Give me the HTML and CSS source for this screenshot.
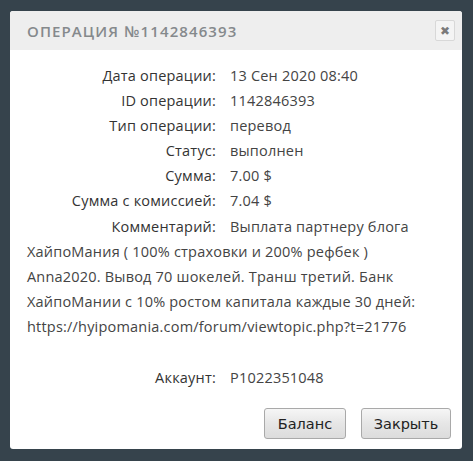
FILE: index.html
```html
<!DOCTYPE html>
<html lang="ru">
<head>
<meta charset="utf-8">
<link rel="stylesheet" href="styles.css">
</head>
<body>
<div class="dialog">
  <div class="dialog-head">
    <span class="dialog-title">Операция №1142846393</span>
    <span class="close-btn">&#10006;</span>
  </div>
  <div class="dialog-body">
    <div class="row"><span class="lbl">Дата операции:</span><span class="val">13 Сен 2020 08:40</span></div>
    <div class="row"><span class="lbl">ID операции:</span><span class="val">1142846393</span></div>
    <div class="row"><span class="lbl">Тип операции:</span><span class="val">перевод</span></div>
    <div class="row"><span class="lbl">Статус:</span><span class="val">выполнен</span></div>
    <div class="row"><span class="lbl">Сумма:</span><span class="val">7.00 $</span></div>
    <div class="row"><span class="lbl">Сумма с комиссией:</span><span class="val">7.04 $</span></div>
    <div class="row comment"><span class="lbl">Комментарий:</span>Выплата партнеру блога ХайпоМания ( 100% страховки и 200% рефбек ) Anna2020. Вывод 70 шокелей. Транш третий. Банк ХайпоМании с 10% ростом капитала каждые 30 дней: https://hyipomania.com/forum/viewtopic.php?t=21776</div>
    <div class="row account"><span class="lbl">Аккаунт:</span><span class="val">P1022351048</span></div>
    <div class="actions">
      <button class="btn btn-balance">Баланс</button>
      <button class="btn btn-close">Закрыть</button>
    </div>
  </div>
</div>
</body>
</html>
```
FILE: styles.css
```css
html, body {
  margin: 0;
  padding: 0;
}
body {
  background: #36434c;
  padding: 11px 11px 0 10px;
  height: 461px;
  box-sizing: border-box;
  font-family: "Open Sans", "Noto Sans", sans-serif;
}
.dialog {
  width: 452px;
  background: #fff;
  border-radius: 3px;
  overflow: hidden;
}
.dialog-head {
  height: 39px;
  background: #eeeeee;
  display: flex;
  align-items: center;
  justify-content: space-between;
  padding: 0 7px 0 17px;
}
.dialog-title {
  text-transform: uppercase;
  color: #85898c;
  font-size: 15px;
  font-weight: 600;
  letter-spacing: 1.1px;
}
.close-btn {
  width: 18px;
  height: 19px;
  border: 1px solid #d8d8d8;
  border-radius: 2px;
  background: #f4f4f4;
  color: #7a7a7a;
  font-size: 12px;
  display: flex;
  align-items: center;
  justify-content: center;
  font-family: "DejaVu Sans", sans-serif;
}
.dialog-body {
  padding: 13px 11px 10px 17px;
  color: #3a3a3a;
  font-size: 14.5px;
  letter-spacing: 0.2px;
  line-height: 25.1px;
}
.row {
  display: block;
  padding-right: 22px;
}
.lbl {
  display: inline-block;
  width: 189px;
  margin-right: 14px;
  text-align: right;
  color: #333;
}
.val {
  color: #444;
}
.comment {
  color: #444;
  margin-bottom: 26px;
}
.actions {
  display: flex;
  justify-content: flex-end;
  gap: 15px;
  margin-top: 18px;
}
.btn {
  height: 31px;
  border: 1px solid #a9a9a9;
  border-radius: 3px;
  background: linear-gradient(#f6f6f6, #e6e6e6 50%, #dcdcdc);
  font-family: "DejaVu Sans", sans-serif;
  font-size: 14.5px;
  color: #222;
  padding: 0;
}
.btn-balance { width: 82px; }
.btn-close { width: 90px; }
```
